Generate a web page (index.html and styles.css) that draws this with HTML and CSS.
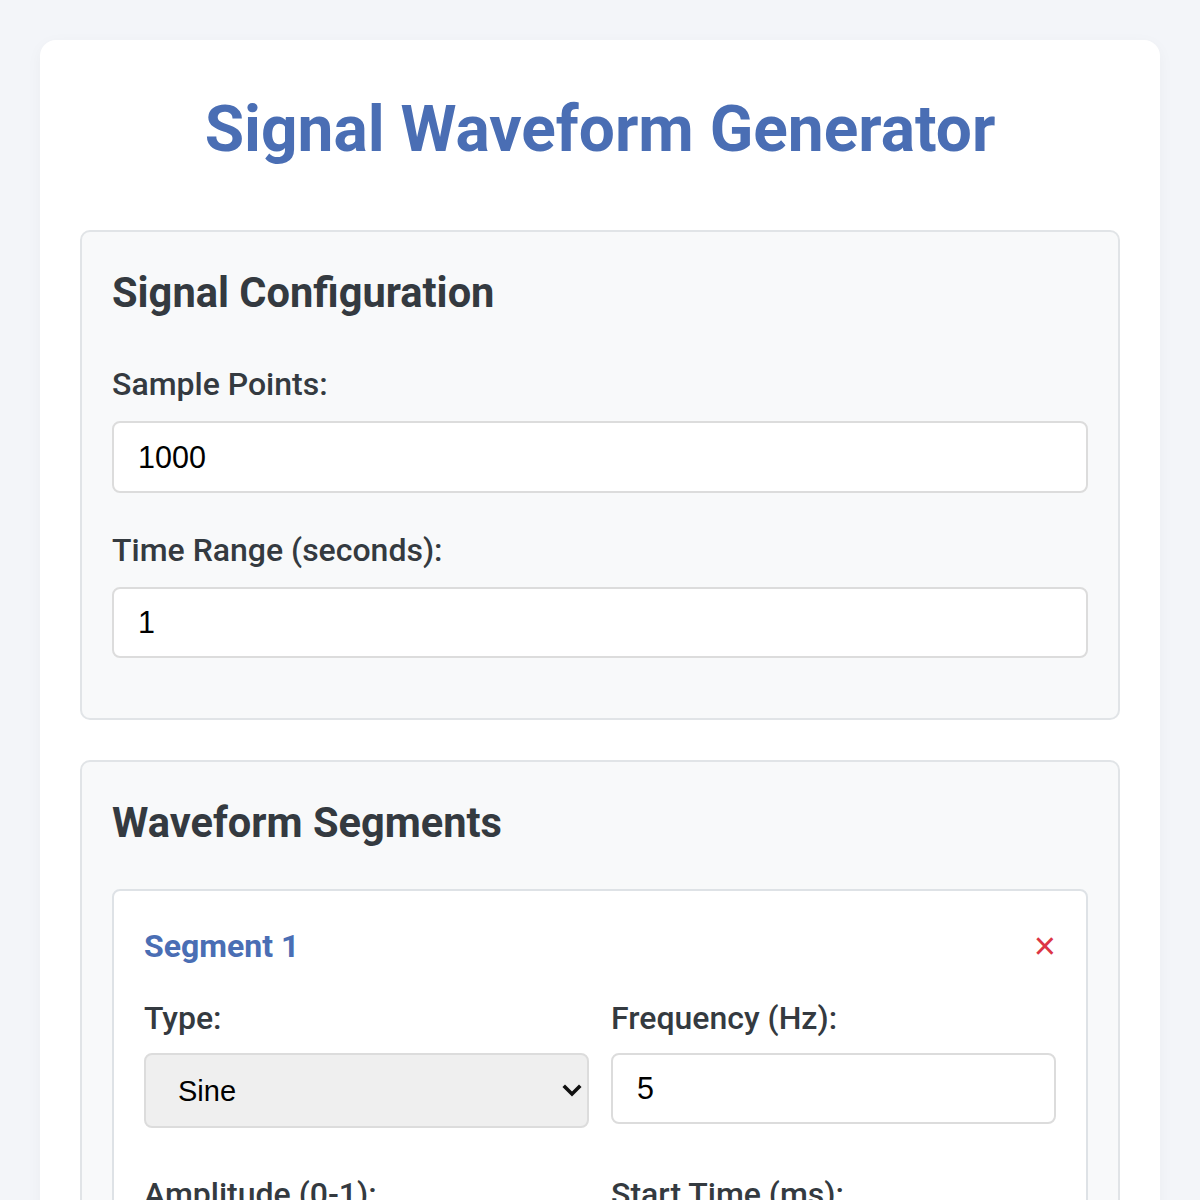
FILE: index.html
```html
<!DOCTYPE html>
<html lang="en">
<head>
<meta charset="utf-8">
<title>Signal Waveform Generator</title>
<link rel="stylesheet" href="styles.css">
</head>
<body>
<div class="container">
  <h1 class="title">Signal Waveform Generator</h1>

  <section class="panel">
    <h2 class="panel-title">Signal Configuration</h2>
    <div class="form-group">
      <label class="field-label" for="points">Sample Points:</label>
      <input class="field-input field-input--tall" id="points" type="number" value="1000">
    </div>
    <div class="form-group">
      <label class="field-label" for="range">Time Range (seconds):</label>
      <input class="field-input" id="range" type="number" value="1">
    </div>
  </section>

  <section class="panel panel--segments">
    <h2 class="panel-title">Waveform Segments</h2>
    <div class="segment">
      <div class="segment-header">
        <h3 class="segment-title">Segment 1</h3>
        <button class="remove-btn" type="button">×</button>
      </div>
      <div class="segment-grid">
        <div class="form-group">
          <label class="field-label">Type:</label>
          <div class="select-wrap">
            <select class="field-select">
              <option>Sine</option>
              <option>Square</option>
              <option>Triangle</option>
              <option>Sawtooth</option>
            </select>
            <svg class="select-arrow" width="20" height="14" viewBox="0 0 20 14"><path d="M3 3 L10 10 L17 3" fill="none" stroke="#111" stroke-width="3.6" stroke-linecap="square"/></svg>
          </div>
        </div>
        <div class="form-group">
          <label class="field-label">Frequency (Hz):</label>
          <input class="field-input" type="number" value="5">
        </div>
        <div class="form-group">
          <label class="field-label">Amplitude (0-1):</label>
          <input class="field-input" type="number" value="1">
        </div>
        <div class="form-group">
          <label class="field-label">Start Time (ms):</label>
          <input class="field-input" type="number" value="0">
        </div>
      </div>
    </div>
  </section>
</div>
</body>
</html>
```
FILE: styles.css
```css
html, body {
  margin: 0;
  padding: 0;
}
body {
  background: #f3f5f9;
  padding: 40px;
  font-family: Roboto, "Liberation Sans", Arial, sans-serif;
  color: #343a40;
}
.container {
  background: #ffffff;
  border-radius: 16px;
  padding: 52px 40px 40px;
  box-shadow: 0 4px 16px rgba(0, 0, 0, 0.04);
}
.title {
  margin: 0 0 63px;
  text-align: center;
  font-size: 64px;
  line-height: 75px;
  font-weight: 700;
  color: #4a6eb4;
}
.panel {
  background: #f8f9fa;
  border: 2px solid #e1e4e7;
  border-radius: 10px;
  padding: 35px 30px 30px;
  margin-bottom: 40px;
}
.panel-title {
  margin: 0 0 46px;
  font-size: 41.6px;
  line-height: 52px;
  font-weight: 700;
  color: #343a40;
}
.panel--segments .panel-title {
  margin-bottom: 40px;
}
.form-group {
  margin-bottom: 38px;
}
.panel > .form-group:last-child {
  margin-bottom: 30px;
}
.field-label {
  display: block;
  font-size: 32px;
  line-height: 38px;
  font-weight: 500;
  color: #343a40;
  margin-bottom: 18px;
}
.field-input,
.field-select {
  display: block;
  width: 100%;
  box-sizing: border-box;
  height: 71px;
  border: 2px solid #dcdcdc;
  border-radius: 8px;
  background: #ffffff;
  padding: 0 24px;
  font-family: "Liberation Sans", Arial, sans-serif;
  font-size: 30.5px;
  color: #000;
  outline: none;
  -moz-appearance: textfield;
}
.field-input--tall {
  height: 72px;
}
.field-input::-webkit-outer-spin-button,
.field-input::-webkit-inner-spin-button {
  -webkit-appearance: none;
  margin: 0;
}
.segment {
  background: #ffffff;
  border: 2px solid #dee2e6;
  border-radius: 8px;
  padding: 37px 30px 30px;
}
.segment-header {
  display: flex;
  justify-content: space-between;
  align-items: center;
  margin-bottom: 35px;
}
.segment-title {
  margin: 0;
  font-size: 32px;
  line-height: 36px;
  font-weight: 700;
  color: #4a6eb4;
}
.remove-btn {
  border: none;
  background: none;
  padding: 0;
  color: #dc3545;
  font-family: "Liberation Sans", Arial, sans-serif;
  font-size: 38px;
  font-weight: 400;
  line-height: 36px;
  cursor: pointer;
}
.segment-grid {
  display: grid;
  grid-template-columns: 1fr 1fr;
  column-gap: 22px;
}
.segment-grid .form-group {
  margin-bottom: 47px;
}
.segment-grid .field-label {
  margin-bottom: 16px;
}
.select-wrap {
  position: relative;
}
.field-select {
  height: 75px;
  background: #efefef;
  padding: 0 60px 0 32px;
  font-size: 29px;
  -webkit-appearance: none;
  appearance: none;
}
.select-arrow {
  position: absolute;
  right: 7px;
  top: 31px;
  pointer-events: none;
}
```
